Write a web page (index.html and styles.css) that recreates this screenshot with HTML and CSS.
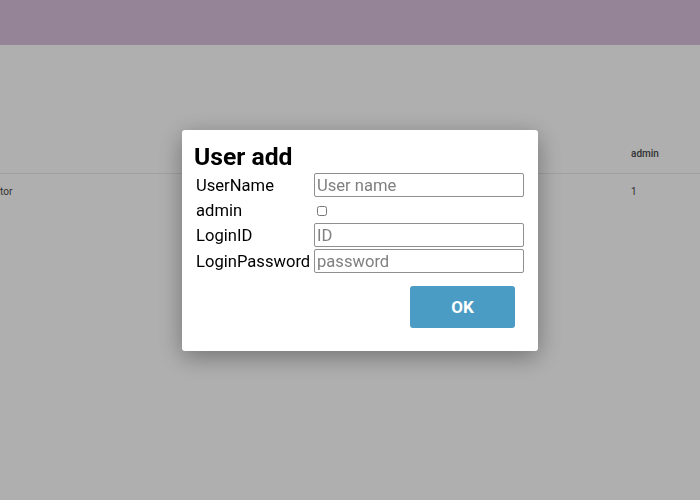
FILE: index.html
```html
<!DOCTYPE html>
<html>
<head>
<meta charset="utf-8">
<link rel="stylesheet" href="styles.css">
</head>
<body>
<header class="topbar"></header>
<main class="content">
  <div class="grid-table">
    <div class="row head">
      <div class="cell first"></div>
      <div class="cell last">admin</div>
    </div>
    <div class="row">
      <div class="cell first">tor</div>
      <div class="cell last">1</div>
    </div>
  </div>
</main>
<div class="overlay">
  <div class="dialog">
    <h2 class="title">User add</h2>
    <form class="form">
      <label class="lbl" for="un">UserName</label>
      <input class="field" id="un" type="text" placeholder="User name">
      <label class="lbl" for="ad">admin</label>
      <div class="checkcell"><input class="check" id="ad" type="checkbox"></div>
      <label class="lbl" for="li">LoginID</label>
      <input class="field" id="li" type="text" placeholder="ID">
      <label class="lbl" for="lp">LoginPassword</label>
      <input class="field" id="lp" type="password" placeholder="password">
    </form>
    <div class="actions">
      <button class="ok" type="button">OK</button>
    </div>
  </div>
</div>
</body>
</html>
```
FILE: styles.css
```css
html, body {
  margin: 0;
  padding: 0;
  width: 700px;
  height: 500px;
  overflow: hidden;
  background: #ffffff;
  font-family: Roboto, "Liberation Sans", sans-serif;
}
.topbar {
  height: 45px;
  background: #dac1dc;
}
.content {
  padding-top: 96px;
}
.grid-table {
  font-size: 10px;
  color: #4a4a4a;
}
.row {
  display: flex;
  justify-content: space-between;
  align-items: center;
}
.row.head {
  height: 33px;
  box-sizing: border-box;
  padding-bottom: 8px;
  border-bottom: 1px solid #eaeaea;
  font-weight: 500;
}
.row:not(.head) {
  height: 34px;
}
.cell.last {
  width: 69px;
}
.overlay {
  position: fixed;
  inset: 0;
  background: rgba(0, 0, 0, 0.315);
  display: flex;
  justify-content: center;
  align-items: flex-start;
  padding: 130px 0 0 20px;
  box-sizing: border-box;
}
.dialog {
  width: 356px;
  height: 221px;
  box-sizing: border-box;
  background: #fff;
  border-radius: 3px;
  box-shadow: 0 6px 24px rgba(0, 0, 0, 0.35);
  padding: 12px 12px 0 12px;
  display: flex;
  flex-direction: column;
}
.title {
  margin: 0 0 2px 0;
  font-size: 24.7px;
  font-weight: 700;
  line-height: 29px;
  color: #000;
}
.form {
  display: grid;
  grid-template-columns: 117px 210px;
  column-gap: 1px;
  row-gap: 2px;
  align-items: center;
  padding-left: 2px;
}
.lbl {
  font-size: 16.6px;
  color: #000;
}
.field {
  box-sizing: border-box;
  width: 210px;
  height: 24px;
  margin: 0;
  padding: 0 2px;
  border: 1px solid #8f8f8f;
  border-radius: 2px;
  font-family: Roboto, "Liberation Sans", sans-serif;
  font-size: 16.6px;
  color: #000;
}
.field::placeholder {
  color: #808080;
}
.checkcell {
  height: 22px;
  display: flex;
  align-items: center;
}
.check {
  width: 10px;
  height: 10px;
  margin: 2px 0 0 3px;
}
.actions {
  display: flex;
  justify-content: flex-end;
  padding: 13px 11px 0 0;
}
.ok {
  width: 105px;
  height: 42px;
  border: none;
  border-radius: 3px;
  background: #4b9cc4;
  color: #fff;
  font-family: Roboto, "Liberation Sans", sans-serif;
  font-weight: 700;
  font-size: 17px;
}
```
